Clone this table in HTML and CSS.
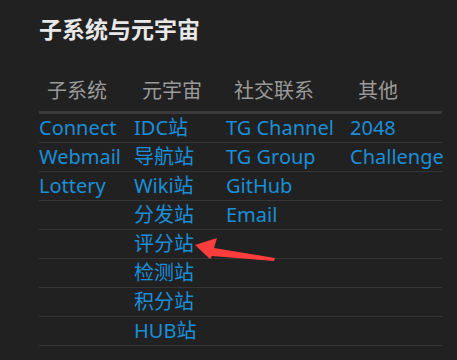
FILE: index.html
```html
<!DOCTYPE html>
<html lang="zh-CN">
<head>
<meta charset="utf-8">
<title>子系统与元宇宙</title>
<link rel="stylesheet" href="styles.css">
</head>
<body>
<main class="page">
  <h2 class="title">子系统与元宇宙</h2>
  <table class="links">
    <colgroup>
      <col class="c1"><col class="c2"><col class="c3"><col class="c4">
    </colgroup>
    <thead>
      <tr><th>子系统</th><th>元宇宙</th><th>社交联系</th><th>其他</th></tr>
    </thead>
    <tbody>
      <tr><td><a href="#">Connect</a></td><td><a href="#">IDC站</a></td><td><a href="#">TG Channel</a></td><td><a href="#">2048</a></td></tr>
      <tr><td><a href="#">Webmail</a></td><td><a href="#">导航站</a></td><td><a href="#">TG Group</a></td><td><a href="#">Challenge</a></td></tr>
      <tr><td><a href="#">Lottery</a></td><td><a href="#">Wiki站</a></td><td><a href="#">GitHub</a></td><td></td></tr>
      <tr><td></td><td><a href="#">分发站</a></td><td><a href="#">Email</a></td><td></td></tr>
      <tr><td></td><td><a href="#">评分站</a></td><td></td><td></td></tr>
      <tr><td></td><td><a href="#">检测站</a></td><td></td><td></td></tr>
      <tr><td></td><td><a href="#">积分站</a></td><td></td><td></td></tr>
      <tr><td></td><td><a href="#">HUB站</a></td><td></td><td></td></tr>
    </tbody>
  </table>
  <svg class="arrow" width="457" height="360" viewBox="0 0 457 360" aria-hidden="true">
    <polygon points="195,245 217,238 214,248 275,258 274,261 212,256 210,259" fill="#ff3d3d"/>
  </svg>
</main>
</body>
</html>
```

FILE: styles.css
```css
html, body {
  margin: 0;
  padding: 0;
  background: #212121;
}

.page {
  position: relative;
  width: 457px;
  height: 360px;
  box-sizing: border-box;
  padding: 14px 0 0 39px;
  font-family: "Noto Sans", "Noto Sans CJK SC", sans-serif;
  overflow: hidden;
}

.title {
  margin: 0;
  font-size: 23px;
  line-height: 30px;
  font-weight: 700;
  color: #e8e8e8;
}

.links {
  margin-top: 23px;
  width: 403px;
  table-layout: fixed;
  border-collapse: collapse;
}

.c1 { width: 95px; }
.c2 { width: 92px; }
.c3 { width: 124px; }
.c4 { width: 92px; }

.links th {
  height: 44px;
  padding: 0 0 0 8px;
  text-align: left;
  font-weight: 400;
  font-size: 20px;
  color: #9a9a9a;
  border-bottom: 3px solid #3a3a3a;
  vertical-align: middle;
}

.links td {
  height: 28px;
  padding: 0;
  font-size: 20px;
  line-height: 28px;
  border-bottom: 1px solid #353535;
  white-space: nowrap;
  vertical-align: middle;
}

.links a {
  color: #1a8fd8;
  text-decoration: none;
}

.arrow {
  position: absolute;
  left: 0;
  top: 0;
  pointer-events: none;
}
```
